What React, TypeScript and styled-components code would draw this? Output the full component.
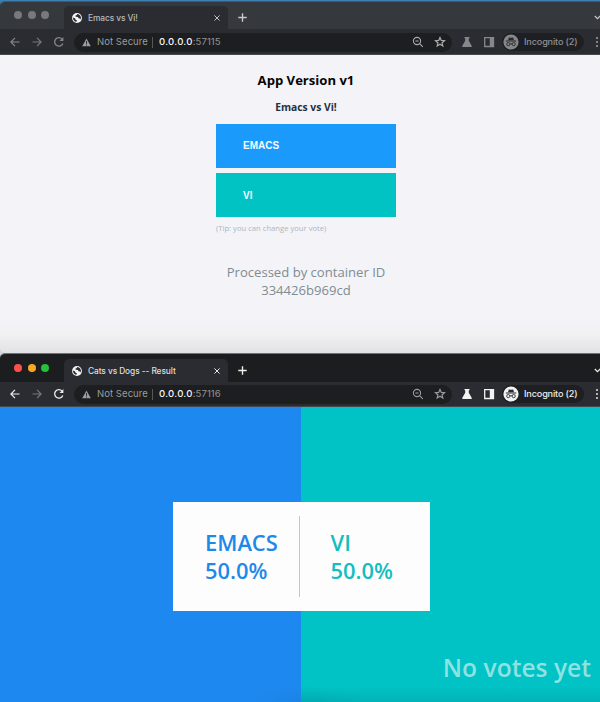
import React from "react";
import styled, { createGlobalStyle } from "styled-components";

const GlobalStyle = createGlobalStyle`
  * { box-sizing: border-box; }
  body { margin: 0; overflow: hidden; }
`;

const Desktop = styled.div`
  width: 600px;
  height: 702px;
  padding-top: 1px;
  overflow: hidden;
  display: grid;
  grid-template-rows: 352px 349px;
  background: linear-gradient(#3d83b5 0, #38698f 6px, #d4d6da 7px);
`;

const Window = styled.section<{ $active: boolean }>`
  display: flex;
  flex-direction: column;
  overflow: hidden;
  border-radius: ${(p) => (p.$active ? "5px 0 0 0" : "5px 0 0 5px")};
  border-top: 1px solid ${(p) => (p.$active ? "#707173" : "#4a5761")};
`;

const TabStrip = styled.header<{ $active: boolean }>`
  flex: none;
  height: 28px;
  padding-bottom: ${(p) => (p.$active ? 0 : 1)}px;
  display: flex;
  align-items: flex-end;
  background: ${(p) => (p.$active ? "#1c1d1f" : "linear-gradient(#35383c 27px, #2b2c31 27px)")};
`;

const Lights = styled.div`
  width: 64px;
  height: 27px;
  padding: 0 0 ${1}px 14px;
  display: flex;
  align-items: center;
  gap: 5.6px;
`;

const Light = styled.i<{ $color: string }>`
  width: 8px;
  height: 8px;
  border-radius: 50%;
  background: ${(p) => p.$color};
`;

const Tab = styled.div`
  width: 164px;
  height: 23px;
  padding: 0 7px 0 8px;
  display: flex;
  align-items: center;
  background: #2b2c31;
  border-radius: 5px 5px 0 0;
`;

const Label = styled.span<{ $size: number; $color: string; $spacing?: number }>`
  font: 400 ${(p) => p.$size}px/12px Inter, "Liberation Sans", sans-serif;
  letter-spacing: ${(p) => p.$spacing ?? 0}px;
  color: ${(p) => p.$color};
  white-space: pre;
`;

const TabTitle = styled(Label)`
  flex: 1;
  margin-left: 6px;
  font-weight: 500;
`;

const PlusIcon = styled.svg`
  margin: 0 0 6px 9px;
`;

const TabMenuIcon = styled.svg`
  margin: 0 -2px 7px auto;
`;

const Toolbar = styled.div<{ $active: boolean }>`
  flex: none;
  height: 25px;
  display: flex;
  align-items: center;
  background: #2b2c31;
  border-bottom: 1px solid ${(p) => (p.$active ? "#42484f" : "#48494d")};
`;

const Navigation = styled.nav`
  width: 74px;
  padding-left: 9px;
  display: flex;
  gap: 10px;
`;

const AddressBar = styled.div`
  width: 378px;
  height: 19px;
  padding: 0 6px 0 8px;
  display: flex;
  align-items: center;
  border-radius: 10px;
  background: #1d1e20;
`;

const Security = styled(Label)`
  width: 51px;
  margin-left: 6px;
`;

const Separator = styled.i`
  width: 1px;
  height: 11px;
  margin: 0 6px 0 4px;
  background: #55575a;
`;

const Url = styled(Label)`
  flex: 1;
`;

const Host = styled.span`
  font-weight: 500;
  letter-spacing: 0.25px;
`;

const Port = styled.span`
  color: #929497;
`;

const AddressIcons = styled.div`
  display: flex;
  gap: 10px;
`;

const Extensions = styled.div`
  display: flex;
  gap: 10px;
  margin-left: 9px;
`;

const Profile = styled.div`
  width: 82px;
  height: 18px;
  margin-left: 7px;
  padding-left: 1px;
  display: flex;
  align-items: center;
  gap: 5px;
  border-radius: 9px;
  background: #1e1f22;
`;

const ProfileName = styled(Label)`
  font-weight: 500;
`;

const MoreIcon = styled.svg`
  flex: none;
  margin-left: 10px;
`;

interface ChromeProps {
  active: boolean;
  title: string;
  port: string;
  children: React.ReactNode;
}

function BrowserWindow({ active, title, port, children }: ChromeProps) {
  const bright = active ? "#f2f3f4" : "#85878a";
  const nav = active ? "#eceded" : "#85878a";
  const tool = active ? "#999b9e" : "#aaacae";
  const lights = active ? ["#ff514b", "#f6a723", "#25c13a"] : ["#77797c", "#77797c", "#77797c"];
  return (
    <Window $active={active}>
      <TabStrip $active={active}>
        <Lights>
          {lights.map((color, i) => (
            <Light key={i} $color={color} />
          ))}
        </Lights>
        <Tab>
          <svg width="10" height="10" viewBox="0 0 10 10">
            <circle cx="5" cy="5" r="4.9" fill="#f5f5f6" />
            <path d="M1 4.5 3 5.3 3.6 6.8 4.9 7.3 4.3 8.9C2 8.5.9 6.7 1 4.5ZM5.2 1 4.6 2.2 3.4 2.5 3.7 3.7 6 3.9 6.4 5.3 7.8 5.4 8.6 6.5C9.8 3.8 8 1.3 5.2 1Z" fill="#2b2c31" />
          </svg>
          <TabTitle $size={8.4} $color={active ? "#dddedf" : "#b9babc"} $spacing={-0.1}>
            {title}
          </TabTitle>
          <svg width="8" height="8" viewBox="0 0 8 8" stroke={active ? "#e6e6e7" : "#c0c1c3"} strokeWidth="1">
            <path d="m1.4 1.4 5.2 5.2m0-5.2L1.4 6.6" />
          </svg>
        </Tab>
        <PlusIcon width="11" height="11" viewBox="0 0 11 11" stroke={active ? "#eeeeef" : "#c7c9cb"} strokeWidth="1.4">
          <path d="M5.5 1.3v8.4M1.3 5.5h8.4" />
        </PlusIcon>
        <TabMenuIcon width="9" height="9" viewBox="0 0 9 9" fill="none" stroke={active ? "#eeeeef" : "#c7c9cb"} strokeWidth="1.2">
          <path d="m1.8 3 2.7 2.7L7.2 3" />
        </TabMenuIcon>
      </TabStrip>
      <Toolbar $active={active}>
        <Navigation>
          <svg width="12" height="12" viewBox="0 0 12 12" fill="none" stroke={nav} strokeWidth="1.2">
            <path d="M10.5 6H2m4-4.1L1.9 6 6 10.1" />
          </svg>
          <svg width="12" height="12" viewBox="0 0 12 12" fill="none" stroke="#77797c" strokeWidth="1.2">
            <path d="M1.5 6H10M6 1.9 10.1 6 6 10.1" />
          </svg>
          <svg width="12" height="12" viewBox="0 0 12 12" fill="none" stroke={nav} strokeWidth="1.3">
            <path d="M9 3.1A4.2 4.2 0 1 0 9.8 7.4" />
            <path d="M10.4 1v4H6.5Z" fill={nav} stroke="none" />
          </svg>
        </Navigation>
        <AddressBar>
          <svg width="9" height="9" viewBox="0 0 9 9">
            <path d="M4.5.6 8.8 8.3H.2Z" fill="#9a9c9f" />
            <path d="M4.5 3v2.8m0 .7v1" stroke="#1d1e20" strokeWidth=".9" />
          </svg>
          <Security $size={9.5} $color="#9a9c9f" $spacing={0.06}>
            Not Secure
          </Security>
          <Separator />
          <Url $size={9.6} $color="#f5f5f6" $spacing={0.06}>
            <Host>0.0.0.0</Host>
            <Port>:{port}</Port>
          </Url>
          <AddressIcons>
            <svg width="12" height="12" viewBox="0 0 12 12" fill="none" stroke={tool} strokeWidth="1.1">
              <circle cx="5" cy="5" r="3.6" />
              <path d="M3.4 5h3.2M7.6 7.6l3.2 3.2" />
            </svg>
            <svg width="12" height="12" viewBox="0 0 12 12" fill="none" stroke={tool} strokeWidth="1.2">
              <path d="m6 1.5 1.3 2.9 3.2.3-2.4 2.1.7 3.2L6 8.3l-2.8 1.7.7-3.2-2.4-2.1 3.2-.3Z" />
            </svg>
          </AddressIcons>
        </AddressBar>
        <Extensions>
          <svg width="12" height="12" viewBox="0 0 12 12" fill={bright}>
            <path d="M3.5 1h5v1.3H7.8v2.5l3 5.1q.3 1-.7 1.1H1.9q-1-.1-.7-1.1l3-5.1V2.3h-.7Z" />
          </svg>
          <svg width="12" height="12" viewBox="0 0 12 12">
            <path d="M1.7 1.7h8.8v8.8H1.7Z" fill="none" stroke={bright} strokeWidth="1.3" />
            <path d="M6.8 2h3.5v8.2H6.8Z" fill={bright} />
          </svg>
        </Extensions>
        <Profile>
          <svg width="16" height="16" viewBox="0 0 16 16">
            <circle cx="8" cy="8" r="7.6" fill={bright} />
            <path d="M5 6.2 5.8 3.5 8 3.8l2.2-.3.8 2.7Z" fill="#292a2d" />
            <path d="M2.8 7h10.4" stroke="#292a2d" />
            <g fill="none" stroke="#292a2d" strokeWidth=".9">
              <circle cx="5.3" cy="10.1" r="1.6" />
              <circle cx="10.7" cy="10.1" r="1.6" />
              <path d="M6.9 10q1.1-.6 2.2 0" />
            </g>
          </svg>
          <ProfileName $size={9.1} $color={active ? "#ededee" : "#8e9093"} $spacing={-0.14}>
            Incognito (2)
          </ProfileName>
        </Profile>
        <MoreIcon width="5" height="12" viewBox="0 0 5 12" fill={active ? "#eeeeef" : "#a5a7aa"}>
          <circle cx="3" cy="2" r=".95" />
          <circle cx="3" cy="6" r=".95" />
          <circle cx="3" cy="10" r=".95" />
        </MoreIcon>
      </Toolbar>
      {children}
    </Window>
  );
}

const VotePage = styled.main`
  flex: 1;
  padding: 15px 12px 0 24px;
  display: flex;
  flex-direction: column;
  align-items: center;
  font-family: "Open Sans", sans-serif;
  background: linear-gradient(#f4f3f8 0, #f4f3f8 264px, #f1f1f3 279px, #e2e2e4 298px);
`;

const Heading = styled.h1`
  margin: 0;
  font-size: 13.1px;
  line-height: 20px;
  font-weight: 700;
  color: #050506;
`;

const Question = styled.h2`
  margin: 8px 0;
  font-size: 10.3px;
  line-height: 18px;
  font-weight: 700;
  color: #1d3243;
`;

const Ballot = styled.form`
  width: 180px;
  display: grid;
  gap: 5.5px;
`;

const VoteButton = styled.button<{ $color: string }>`
  height: 43.75px;
  padding: 0 0 0 27px;
  border: 0;
  text-align: left;
  font: 700 10px "Liberation Sans", Arial, sans-serif;
  color: #f4fbff;
  background: ${(p) => p.$color};
`;

const Tip = styled.p`
  width: 180px;
  margin: 4px 0 28px;
  font-size: 7.65px;
  line-height: 14px;
  color: #b0b5bc;
`;

const ContainerInfo = styled.p`
  margin: 0;
  font-size: 13.1px;
  line-height: 18px;
  text-align: center;
  color: #7f8c93;
`;

const ResultPage = styled.main`
  position: relative;
  flex: 1;
  display: grid;
  place-items: start center;
  padding: 95px 0 0 2px;
  font-family: "Open Sans", sans-serif;
  background:
    radial-gradient(ellipse 60px 18px at 50% 100%, rgba(0, 65, 120, 0.08), transparent),
    linear-gradient(transparent 280px, rgba(0, 70, 90, 0.13) 100%) 301px 0 / 299px 100% no-repeat,
    linear-gradient(90deg, #1d89f0 301px, #01c3c5 301px);
`;

const Results = styled.div`
  width: 257px;
  height: 109px;
  padding: 14px 0;
  display: grid;
  grid-template-columns: 127px 130px;
  background: #fefdfe;
`;

const Choice = styled.div<{ $color: string; $divided?: boolean }>`
  padding: 13px 0 0 ${(p) => (p.$divided ? 32.5 : 31)}px;
  font-size: 21.9px;
  line-height: 28px;
  font-weight: 600;
  color: ${(p) => p.$color};
  border-right: ${(p) => (p.$divided ? "1px solid #c2c6cc" : "0")};
`;

const VoteCount = styled.div`
  position: absolute;
  right: 9px;
  bottom: 17px;
  font-size: 24.6px;
  line-height: 34px;
  font-weight: 600;
  color: #8ee2e1;
`;

export default function App() {
  return (
    <>
      <GlobalStyle />
      <Desktop>
        <BrowserWindow active={false} title="Emacs vs Vi!" port="57115">
          <VotePage>
            <Heading>App Version v1</Heading>
            <Question>Emacs vs Vi!</Question>
            <Ballot>
              <VoteButton type="button" $color="#1a9afa">EMACS</VoteButton>
              <VoteButton type="button" $color="#02c3c4">VI</VoteButton>
            </Ballot>
            <Tip>(Tip: you can change your vote)</Tip>
            <ContainerInfo>
              Processed by container ID
              <br />
              334426b969cd
            </ContainerInfo>
          </VotePage>
        </BrowserWindow>
        <BrowserWindow active title="Cats vs Dogs -- Result" port="57116">
          <ResultPage>
            <Results>
              <Choice $color="#1d89e8" $divided>
                EMACS
                <br />
                50.0%
              </Choice>
              <Choice $color="#14bdbf">
                VI
                <br />
                50.0%
              </Choice>
            </Results>
            <VoteCount>No votes yet</VoteCount>
          </ResultPage>
        </BrowserWindow>
      </Desktop>
    </>
  );
}
